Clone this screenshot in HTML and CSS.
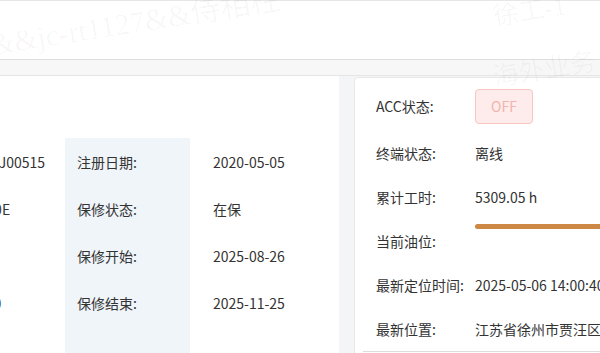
FILE: index.html
```html
<!DOCTYPE html>
<html lang="zh-CN">
<head>
    <meta charset="UTF-8">
    <meta name="viewport" content="width=device-width, initial-scale=1.0">
    <title>设备详情</title>
    <link rel="stylesheet" href="styles.css">
</head>
<body>
<div id="wrap">
    <div class="top-bar"></div>
    <div class="tab-bar"></div>
    <div class="content">
        <!-- 基本信息 -->
        <div class="card-info">
            <div class="info-grid">
                <div class="label">整机编号:</div><div class="value">XUG065CJ00515</div>
                <div class="label">注册日期:</div><div class="value">2020-05-05</div>

                <div class="label">设备型号:</div><div class="value">XE215000E</div>
                <div class="label">保修状态:</div><div class="value">在保</div>

                <div class="label">终端编号:</div><div class="value">-</div>
                <div class="label">保修开始:</div><div class="value">2025-08-26</div>

                <div class="label">出厂日期:</div><div class="value">10000000</div>
                <div class="label">保修结束:</div><div class="value">2025-11-25</div>

                <div class="label"></div><div class="value"></div>
                <div class="label"></div><div class="value"></div>
            </div>
        </div>
        <!-- 终端状态 -->
        <div class="card-state">
            <div class="row row-acc">
                <span class="row-label">ACC状态:</span>
                <span class="acc-off">OFF</span>
            </div>
            <div class="row row-term">
                <span class="row-label">终端状态:</span>
                <span class="row-value">离线</span>
            </div>
            <div class="row">
                <span class="row-label">累计工时:</span>
                <span class="row-value">5309.05 h</span>
            </div>
            <div class="row">
                <span class="row-label">当前油位:</span>
                <div class="oil">
                    <div class="oil-bar"></div>
                </div>
            </div>
            <div class="row">
                <span class="row-label">最新定位时间:</span>
                <span class="row-value">2025-05-06 14:00:40</span>
            </div>
            <div class="row">
                <span class="row-label">最新位置:</span>
                <span class="row-value">江苏省徐州市贾汪区</span>
            </div>
            <div class="divider"></div>
        </div>
    </div>
    <!-- 水印 -->
    <div class="watermark wm-1">&amp;&amp;jc-rt1127&amp;&amp;侍相柱</div>
    <div class="watermark wm-2">徐工-1</div>
    <div class="watermark wm-3">海外业务</div>
</div>
</body>
</html>
```

FILE: styles.css
```css
* {margin: 0; padding: 0; box-sizing: border-box;}

body {width: 600px; height: 353px; overflow: hidden; background-color: #fff;
    font-family: "Noto Sans CJK SC", "Noto Sans", sans-serif; font-size: 14px; color: #333;}

#wrap {position: relative; width: 100%; height: 100%; overflow: hidden;}

/* 顶部 */
.top-bar {height: 59px; border-top: 1px solid #e6e6e6; background-color: #fff;}
.tab-bar {height: 17px; background-color: #f7f7f7; border-top: 1px solid #dedede; border-bottom: 1px solid #e6e6e6;}

.content {display: flex; gap: 15px; background-color: #f4f5f7; height: 300px;}

/* 基本信息 */
.card-info {flex: none; width: 548px; margin-left: -209px; padding-top: 62px; background-color: #fff;}
.info-grid {display: grid; grid-template-columns: 125px 149px 125px 149px; grid-auto-rows: 47px;}
.info-grid .label {display: flex; align-items: center; padding-left: 12px; background-color: #f0f5fa;}
.info-grid .value {display: flex; align-items: center; padding-left: 23px; white-space: nowrap;}

/* 终端状态 */
.card-state {flex: none; width: 300px; margin-top: 1px; padding: 4px 0 0 21px; background-color: #fff;
    border: 1px solid #e8e8e8; border-radius: 4px;}
.row {display: flex; align-items: center; height: 44px; white-space: nowrap;}
.row-acc {height: 48px;}
.row-term {height: 45px;}
.row-label {width: 99px; flex: none;}
.acc-off {display: flex; align-items: center; justify-content: center; width: 58px; height: 35px;
    color: #f2b5ad; background-color: #fdeceb; border: 1px solid #f7c6bf; border-radius: 4px;}
.oil {flex: 1; padding-bottom: 29px;}
.oil-bar {height: 5px; border-radius: 3px; background-color: #cc8844;}
.divider {height: 1px; margin-left: -13px; background-color: #dcdcdc;}

/* 水印 */
.watermark {position: absolute; font-family: "Liberation Serif", "Noto Sans CJK SC", serif; color: rgba(0,0,0,0.035);
    white-space: nowrap; pointer-events: none;}
.wm-1 {left: -6px; top: 20px; font-size: 30px; transform: rotate(-9deg); transform-origin: left bottom;}
.wm-2 {left: 492px; top: -10px; font-size: 26px; transform: rotate(-9deg);}
.wm-3 {left: 492px; top: 48px; font-size: 26px; transform: rotate(-9deg);}
```
